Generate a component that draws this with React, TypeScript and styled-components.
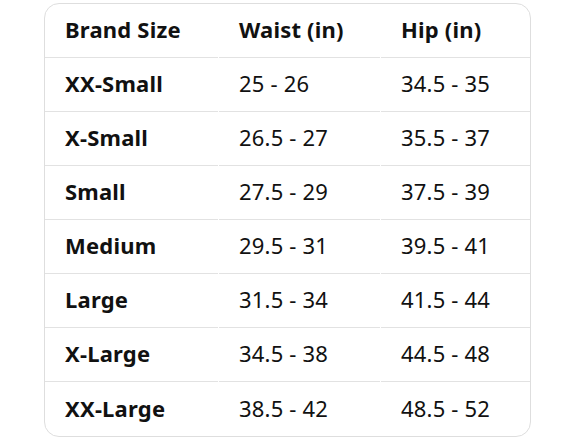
import React from "react";
import styled, { createGlobalStyle } from "styled-components";

const GlobalStyle = createGlobalStyle`
  html, body {
    margin: 0;
    background: #fff;
  }
  body {
    font-family: "Noto Sans", "Open Sans", Arial, sans-serif;
    color: #111;
  }
`;

const Page = styled.div`
  padding: 3px 0 0 44px;
`;

const Card = styled.div`
  width: 487px;
  border: 1px solid #dedede;
  border-radius: 15px;
  overflow: hidden;
  box-sizing: border-box;
`;

const Grid = styled.div`
  display: grid;
  grid-template-columns: 173px 161px 1fr;
  column-gap: 1px;
`;

const Cell = styled.div<{ $bold?: boolean; $last?: boolean }>`
  height: 54px;
  box-sizing: border-box;
  display: flex;
  align-items: center;
  padding: 0 0 3px 20px;
  font-size: 22px;
  letter-spacing: 0.2px;
  font-weight: ${(p) => (p.$bold ? 700 : 400)};
  border-bottom: ${(p) => (p.$last ? "none" : "1px solid #e2e2e2")};
  color: #111;
`;

const rows = [
  ["XX-Small", "25 - 26", "34.5 - 35"],
  ["X-Small", "26.5 - 27", "35.5 - 37"],
  ["Small", "27.5 - 29", "37.5 - 39"],
  ["Medium", "29.5 - 31", "39.5 - 41"],
  ["Large", "31.5 - 34", "41.5 - 44"],
  ["X-Large", "34.5 - 38", "44.5 - 48"],
  ["XX-Large", "38.5 - 42", "48.5 - 52"],
];

const App: React.FC = () => {
  return (
    <Page>
      <GlobalStyle />
      <Card>
        <Grid>
          <Cell $bold>Brand Size</Cell>
          <Cell $bold>Waist (in)</Cell>
          <Cell $bold>Hip (in)</Cell>
          {rows.map((r, i) => {
            const last = i === rows.length - 1;
            return (
              <React.Fragment key={r[0]}>
                <Cell $bold $last={last}>{r[0]}</Cell>
                <Cell $last={last}>{r[1]}</Cell>
                <Cell $last={last}>{r[2]}</Cell>
              </React.Fragment>
            );
          })}
        </Grid>
      </Card>
    </Page>
  );
};

export default App;
